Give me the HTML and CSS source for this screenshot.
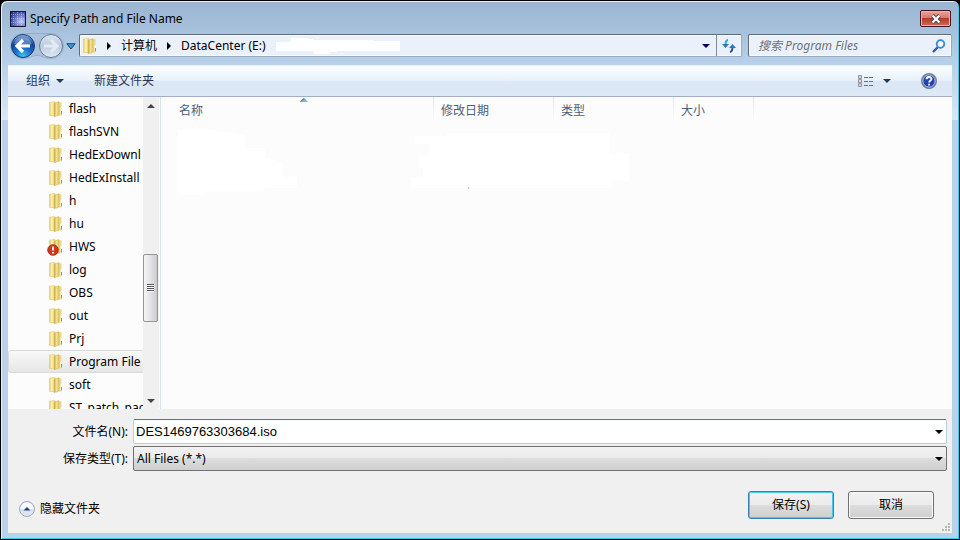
FILE: index.html
```html
<!DOCTYPE html>
<html lang="zh-CN">
<head>
<meta charset="utf-8">
<title>Specify Path and File Name</title>
<link rel="stylesheet" href="styles.css">
</head>
<body>
<svg class="defs" aria-hidden="true">
  <defs>
    <linearGradient id="gold" x1="0" x2="1"><stop offset="0" stop-color="#e6cb6c"/><stop offset=".4" stop-color="#fbf3b4"/><stop offset="1" stop-color="#ecd67c"/></linearGradient>
    <linearGradient id="gold2" x1="0" x2="1"><stop offset="0" stop-color="#c9a743"/><stop offset=".5" stop-color="#f3e090"/><stop offset="1" stop-color="#e0c462"/></linearGradient>
    <radialGradient id="orb" cx=".5" cy=".95" r=".9"><stop offset="0" stop-color="#3fc4f4"/><stop offset=".45" stop-color="#1768c0"/><stop offset=".75" stop-color="#12449b"/><stop offset="1" stop-color="#7ea6d8"/></radialGradient>
    <linearGradient id="pale" x1="0" y1="0" x2="0" y2="1"><stop offset="0" stop-color="#dbe5f0"/><stop offset=".5" stop-color="#bccbde"/><stop offset="1" stop-color="#dce8f4"/></linearGradient>
    <radialGradient id="app" cx=".7" cy=".65" r=".8"><stop offset="0" stop-color="#c4cdf8"/><stop offset=".5" stop-color="#6675c8"/><stop offset="1" stop-color="#232b7c"/></radialGradient>
    <symbol id="folder" viewBox="0 0 14 16">
      <path d="M6 1.200h6.500v13.300H6z" fill="#ecd98e"/>
      <path d="M.5 1 6 .5v14L.5 14.500z" fill="url(#gold)" stroke="#dcc26c" stroke-width=".5"/>
      <path d="M5 2.500 10 .6v13.400L5 15.800z" fill="url(#gold2)" stroke="#d4b655" stroke-width=".5"/>
      <path d="M12.300 7.500v6" stroke="#fff" stroke-width="1.600"/><path d="M12.500 10v3.500" stroke="#4aa6dc"/>
    </symbol>
  </defs>
</svg>
<main class="window">
  <header class="titlebar">
    <svg class="app-icon" viewBox="0 0 16 16"><path fill="url(#app)" d="M0 0h16v16H0z"/><path d="M3.500 1v14M7.500 1v14M11.500 1v14M1 3.500h14M1 7.500h14M1 11.500h14" stroke="#dce2ff" stroke-opacity=".45" stroke-dasharray="1 1"/><path fill="none" stroke="#15182f" d="M.5.5h15v15H.5z"/></svg>
    <h1>Specify Path and File Name</h1>
    <button class="close" aria-label="Close"><svg viewBox="0 0 12 10"><path d="m2.500 1.500 7 7m0-7-7 7" stroke="#4c4450" stroke-width="4"/><path d="m2.500 1.500 7 7m0-7-7 7" stroke="#fff" stroke-width="2.200"/></svg></button>
  </header>
  <nav class="navbar">
    <div class="history">
      <svg class="shell" viewBox="0 0 54 26"><path d="M13 .5h28a12.500 12.500 0 0 1 0 25c-7 0-9-3-14-3s-7 3-14 3a12.500 12.500 0 0 1 0-25z" fill="#abc1db" stroke="#97aecb"/></svg>
      <button aria-label="Back"><svg viewBox="0 0 24 24"><circle cx="12" cy="12" r="11.500" fill="url(#orb)" stroke="#1b3f78"/><path d="M3 10a9.500 9.500 0 0 1 18 0q-9 3-18 0" fill="#fff" opacity=".3"/><path d="m12 6-6 6 6 6M7 12h12" fill="none" stroke="#fff" stroke-width="3.200"/></svg></button>
      <button aria-label="Forward"><svg viewBox="0 0 24 24"><circle cx="12" cy="12" r="11.500" fill="url(#pale)" stroke="#667c99"/><path d="m12 6 6 6-6 6M17 12H5" fill="none" stroke="#e2eaf3" stroke-width="3.200"/></svg></button>
    </div>
    <button class="recent" aria-label="Recent pages"><svg viewBox="0 0 10 7"><path d="M.8.7h8.400L5 6z" fill="#3a94d0" stroke="#174a80"/></svg></button>
    <div class="address">
      <svg class="folder" aria-hidden="true"><use href="#folder"/></svg>
      <svg class="crumb-arrow" viewBox="0 0 4 8"><path d="m0 0 4 4-4 4z"/></svg>
      <a href="#computer">计算机</a>
      <svg class="crumb-arrow" viewBox="0 0 4 8"><path d="m0 0 4 4-4 4z"/></svg>
      <a href="#drive">DataCenter (E:)</a>
      <svg class="blank" viewBox="0 0 124 16"><path fill="#fff" d="M0 4h15V0h16v1h6v1h60v1h27v10H61v1h-7v2H38v-3H0z"/></svg>
      <button class="drop" aria-label="Previous locations"><svg class="down" viewBox="0 0 8 4"><path d="M0 0h8L4 4z" fill="#000060"/></svg></button>
      <button class="refresh" aria-label="Refresh"><svg viewBox="0 0 14 14"><path d="M6 1Q3.500 1.500 3.500 6" fill="none" stroke="#3da2d4" stroke-width="2"/><path d="M0 5h7L3.500 9z" fill="#2b78c2"/><path d="M8 13q2.500-.5 2.500-5" fill="none" stroke="#284e9c" stroke-width="2"/><path d="M7 9h7l-3.500-4z" fill="#2b78c2"/></svg></button>
    </div>
    <label class="search"><input type="search" aria-label="搜索" placeholder="搜索 Program Files"><svg viewBox="0 0 14 14"><path d="m1 13 5-5" stroke="#2f5ca8" stroke-width="2.400"/><circle cx="8.500" cy="5" r="3.800" fill="#eef7ff" stroke="#3a88cc" stroke-width="1.800"/></svg></label>
  </nav>
  <section class="content">
    <div class="toolbar">
      <button>组织<svg class="down" viewBox="0 0 8 4"><path d="M0 0h8L4 4z"/></svg></button>
      <button>新建文件夹</button>
      <button class="view" aria-label="View"><svg class="list" viewBox="0 0 15 13"><path d="M.5.5h3v3h-3zM.5 4.500h3v3h-3zM.5 8.500h3v3h-3z" fill="#fff" stroke="#8999ab"/><path d="M1.500 2h1" stroke="#547"/><path d="M1.500 6h1" stroke="#d42"/><path d="M1.500 10h1" stroke="#547"/><path d="M6 2.500h4m1 0h4M6 6.500h4m1 0h4M6 10.500h4m1 0h4" stroke="#617389"/></svg><svg class="down" viewBox="0 0 8 4"><path d="M0 0h8L4 4z"/></svg></button>
      <button class="help" aria-label="Help"><svg viewBox="0 0 16 16"><circle cx="8" cy="8" r="7.400" fill="#2344ae" stroke="#777e90" stroke-width="1.200"/><circle cx="8" cy="8" r="6.200" fill="none" stroke="#c7d2ee" stroke-width="1"/><path d="M5.500 6.300c0-3 5-3 5-.4 0 1.700-2.300 1.600-2.300 3.500M8.100 10.800v1.700" fill="none" stroke="#fff" stroke-width="1.800"/></svg></button>
    </div>
    <div class="panes">
      <ul class="tree">
        <li><svg class="folder"><use href="#folder"/></svg>flash</li>
        <li><svg class="folder"><use href="#folder"/></svg>flashSVN</li>
        <li><svg class="folder"><use href="#folder"/></svg>HedExDownl</li>
        <li><svg class="folder"><use href="#folder"/></svg>HedExInstall</li>
        <li><svg class="folder"><use href="#folder"/></svg>h</li>
        <li><svg class="folder"><use href="#folder"/></svg>hu</li>
        <li><svg class="folder"><use href="#folder"/></svg><svg class="alert" viewBox="0 0 12 12"><circle cx="6" cy="6" r="5.300" fill="#cb3a20" stroke="#9f2413" stroke-width=".8"/><path d="M6 2.500v4M6 8v1.600" stroke="#fff" stroke-width="1.800"/></svg>HWS</li>
        <li><svg class="folder"><use href="#folder"/></svg>log</li>
        <li><svg class="folder"><use href="#folder"/></svg>OBS</li>
        <li><svg class="folder"><use href="#folder"/></svg>out</li>
        <li><svg class="folder"><use href="#folder"/></svg>Prj</li>
        <li class="selected"><svg class="folder"><use href="#folder"/></svg>Program File</li>
        <li><svg class="folder"><use href="#folder"/></svg>soft</li>
        <li><svg class="folder"><use href="#folder"/></svg>ST_patch_pac</li>
      </ul>
      <div class="scrollbar">
        <svg class="scroll-arrow" viewBox="0 0 8 4"><path d="M0 4h8L4 0z"/></svg>
        <div class="track"><div class="thumb"><i></i></div></div>
        <svg class="scroll-arrow" viewBox="0 0 8 4"><path d="M0 0h8L4 4z"/></svg>
      </div>
      <div class="files">
        <table>
          <thead><tr><th class="name">名称<svg class="sort" viewBox="0 0 8 4"><path d="M0 4h8L4 0z" fill="#7fb5d4"/><path d="M.5 3.500 4 .5l1 1" fill="none" stroke="#3a6483"/></svg></th><th>修改日期</th><th>类型</th><th class="size">大小</th><th class="rest"></th></tr></thead>
        </table>
        <svg class="cleared" viewBox="0 0 460 65"><path fill="#fff" d="M0 0h35l32 5v13h20v9l18 6v14h14v11H92l-12 3H28v4H0zM236 6h33V3h163v20h19v28h-18v7H233V48h12V38h-4V26h10V14h-15z"/><path d="M290 58h1" stroke="#876"/></svg>
      </div>
    </div>
    <form class="form">
      <div class="fields">
        <label for="filename">文件名(N):</label>
        <div class="combo"><input id="filename" value="DES1469763303684.iso"><svg class="down" viewBox="0 0 8 4"><path d="M0 0h8L4 4z" fill="#000"/></svg></div>
        <label for="filetype">保存类型(T):</label>
        <div class="combo type"><select id="filetype"><option>All Files (*.*)</option></select><svg class="down" viewBox="0 0 8 4"><path d="M0 0h8L4 4z" fill="#000"/></svg></div>
      </div>
      <div class="actions">
        <button type="button" class="hide"><svg viewBox="0 0 16 16"><circle cx="8" cy="8" r="7.500" fill="#dfe5ea" stroke="#9daecb"/><path d="M1.500 8a6.500 6.500 0 0 1 13 0" fill="#fafcfd"/><path d="M4.500 9.500 8 6l3.500 3.500z" fill="#1c4280"/></svg>隐藏文件夹</button>
        <button type="button" class="action primary">保存(S)</button>
        <button type="button" class="action">取消</button>
      </div>
      <svg class="grip" viewBox="0 0 8 8"><path d="M6 0h2v2H6zM3 3h2v2H3zM6 3h2v2H6zM0 6h2v2H0zM3 6h2v2H3zM6 6h2v2H6z" fill="#b9b9b9"/></svg>
    </form>
  </section>
</main>
</body>
</html>
```

FILE: styles.css
```css
* { box-sizing: border-box; }
body {
  margin: 0;
  background: #000;
  color: #000;
  font: 12px/16px "Noto Sans", "Noto Sans CJK SC", sans-serif;
}
button, input, select { font: inherit; color: inherit; }
button { padding: 0; border: 0; background: none; }
svg { display: block; flex: none; }
.defs { position: absolute; width: 0; height: 0; }
.down { width: 8px; height: 4px; fill: #1e395b; }
.folder { width: 14px; height: 16px; }

.window {
  display: flex;
  flex-direction: column;
  min-height: 100vh;
  padding: 1px 6px 6px;
  border: 1px solid #000;
  border-radius: 7px 7px 0 0;
  background: linear-gradient(#99b4d1, #b9d1ea 64px, #dbe7f5 119px, #b9d1ea 119px);
  box-shadow: inset 1px 1px #e9f2fb, inset -1px -1px #35cfee;
}
.titlebar { display: flex; align-items: center; height: 30px; padding: 3px 2px 0 3px; }
.app-icon { width: 16px; height: 16px; }
h1 { flex: 1; margin: 0 0 0 4px; font-size: 12px; font-weight: 400; }
.close {
  display: grid;
  place-items: center;
  width: 31px;
  height: 17px;
  border: 1px solid #431422;
  border-radius: 2px;
  background: linear-gradient(#e6a598, #d4776a 48%, #b93b26 50%, #cd6a55);
  box-shadow: inset 0 0 0 1px #eab4a9;
}
.close svg { width: 12px; height: 10px; }

.navbar { display: flex; align-items: center; height: 33px; padding: 0 1px 6px 3px; }
.history { position: relative; display: flex; gap: 4px; padding: 1px; }
.history .shell { position: absolute; top: 0; left: 0; width: 54px; height: 26px; }
.history button { position: relative; }
.history button svg { width: 24px; height: 24px; }
.recent { margin: 2px 3px 0 2px; }
.recent svg { width: 10px; height: 7px; }
.address, .search {
  display: flex;
  align-items: center;
  height: 23px;
  border: 1px solid #5f6d7c;
  border-right-color: #9aabc0;
  border-bottom-color: #9aabc0;
  border-radius: 2px;
  background: #eaf1fa;
  box-shadow: inset 0 0 0 1px #f7fbff;
}
.address { flex: 1; padding-left: 3px; }
.address a { margin: 0 10px; color: #000; text-decoration: none; white-space: nowrap; }
.crumb-arrow { width: 4px; height: 8px; }
.address .folder + .crumb-arrow { margin-left: 10px; }
.blank { width: 124px; height: 16px; }
.drop { display: grid; place-items: center; width: 20px; height: 21px; margin-left: auto; }
.refresh { display: grid; place-items: center; width: 25px; height: 21px; border-left: 1px solid #7a8a9a; }
.refresh svg { width: 14px; height: 14px; }
.search { flex: 0 0 202px; margin-left: 6px; padding: 0 5px 0 9px; }
.search input { flex: 1; min-width: 0; padding: 0; border: 0; outline: 0; background: none; font-style: italic; }
.search input::placeholder { color: #6d7278; opacity: 1; }
.search svg { width: 14px; height: 14px; }

.content { flex: 1; display: flex; flex-direction: column; margin: 0 1px; background: #f0f0f0; }
.toolbar {
  display: flex;
  align-items: center;
  gap: 30px;
  height: 32px;
  padding: 0 15px 0 18px;
  border-top: 1px solid #e6f0fa;
  border-bottom: 1px solid #a0afc3;
  background: linear-gradient(#fafdff, #e8f1fb 48%, #dce6f4 50%, #dde9f7);
  color: #1e395b;
}
.toolbar button { display: flex; align-items: center; gap: 6px; }
.toolbar .view { gap: 10px; margin-left: auto; }
.list { width: 15px; height: 13px; }
.help svg { width: 16px; height: 16px; }

.panes { flex: 1; display: flex; min-height: 0; background: #fcfcfc; }
.tree { width: 135px; height: 312px; margin: 0; padding: 0; overflow: hidden; list-style: none; }
.tree li { position: relative; display: flex; align-items: center; gap: 6px; width: 150px; height: 23px; padding-left: 40px; border: 1px solid transparent; white-space: nowrap; }
.tree .selected { border-color: #d9d9d9; border-radius: 3px; background: linear-gradient(#f8f8f8, #e6e6e6); }
.alert { position: absolute; left: 38px; bottom: 1px; width: 12px; height: 12px; }
.scrollbar { display: flex; flex-direction: column; align-items: center; width: 16px; padding: 7px 0 6px; background: #f0f0f0; }
.scroll-arrow { width: 8px; height: 4px; fill: #444; }
.track { flex: 1; align-self: stretch; display: grid; grid-template-rows: 146fr 68fr 77fr; }
.thumb { grid-row: 2; display: grid; place-items: center; margin-right: 1px; border: 1px solid #959595; border-radius: 2px; background: linear-gradient(90deg, #f5f5f5, #e3e3e6 50%, #c9cace); }
.thumb i { width: 7px; height: 8px; background: repeating-linear-gradient(#555 0 1px, #fff 1px 2px); }
.files { flex: 1; margin-left: 1px; border-left: 1px solid #d5e3f3; }
table { width: 100%; border-spacing: 0; table-layout: fixed; }
th {
  width: 120px;
  height: 26px;
  padding: 2px 6px 0 7px;
  background: linear-gradient(#dde8f4, #fcfcfc) right / 1px 100% no-repeat;
  color: #4c607a;
  font-weight: 400;
  text-align: left;
}
.name { position: relative; width: 273px; padding-left: 18px; }
.size { width: 80px; }
.rest { width: auto; background: none; }
.sort { position: absolute; top: 1px; left: 51%; width: 8px; height: 4px; }
.cleared { width: 460px; height: 65px; margin: 7px 0 0 17px; }

.form { position: relative; padding: 10px 5px 14px 11px; }
.fields { display: grid; grid-template-columns: 109px 1fr; align-items: center; gap: 2px 5px; }
.fields label { text-align: right; }
.combo { position: relative; }
.combo input, .combo select { display: block; width: 100%; height: 25px; padding: 0 20px 0 2px; outline: 0; border-radius: 2px; }
.combo input { border: 1px solid #b5cfe7; border-top-color: #3d7bad; background: #fff; font: 13px/16px "Liberation Sans", sans-serif; }
.combo select { appearance: none; padding-left: 3px; border: 1px solid #707070; background: linear-gradient(#f2f2f2, #ebebeb 49%, #dddddd 50%, #cfcfcf); }
.combo .down { position: absolute; right: 4px; top: 11px; }
.actions { display: flex; align-items: center; gap: 14px; margin: 20px 13px 0 0; }
.hide { display: flex; align-items: center; gap: 5px; margin: 8px auto 0 0; }
.hide svg { width: 16px; height: 16px; }
.action { width: 86px; height: 28px; border: 1px solid #707070; border-radius: 3px; background: linear-gradient(#f2f2f2, #ebebeb 49%, #dddddd 50%, #cfcfcf); box-shadow: inset 0 0 0 1px #fafafa; }
.primary { border-color: #3c7fb1; box-shadow: inset 0 0 0 1px #46c8f0; }
.grip { position: absolute; right: 2px; bottom: 2px; width: 8px; height: 8px; }
```
